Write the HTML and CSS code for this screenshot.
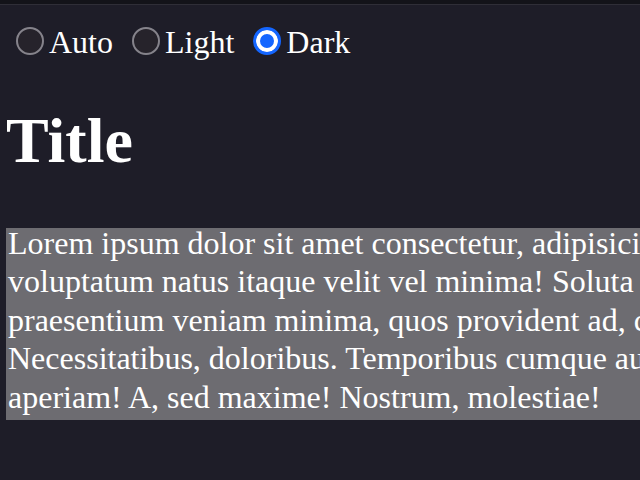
FILE: index.html
```html
<!DOCTYPE html>
<html lang="en">
<head>
<meta charset="utf-8">
<title>Theme</title>
<link rel="stylesheet" href="styles.css">
</head>
<body>
<div class="topbar"></div>
<form class="theme-switch">
  <label class="option"><input type="radio" name="theme" value="auto"><span>Auto</span></label>
  <label class="option"><input type="radio" name="theme" value="light"><span>Light</span></label>
  <label class="option"><input type="radio" name="theme" value="dark" checked><span>Dark</span></label>
</form>
<main class="content">
  <h1 class="title">Title</h1>
  <p class="text"><span class="lines">Lorem ipsum dolor sit amet consectetur, adipisicing elit. Quas eum<br>voluptatum natus itaque velit vel minima! Soluta nemo<br>praesentium veniam minima, quos provident ad, corporis<br>Necessitatibus, doloribus. Temporibus cumque aut<br>aperiam! A, sed maxime! Nostrum, molestiae!</span></p>
</main>
</body>
</html>
```
FILE: styles.css
```css
html, body {
  margin: 0;
  padding: 0;
}
body {
  background: #1e1d28;
  color: #ffffff;
  font-family: "Liberation Serif", "Times New Roman", serif;
  font-size: 32px;
  overflow: hidden;
  height: 480px;
}
.topbar {
  height: 4px;
  background: #131319;
  border-bottom: 1px solid #2f2e37;
}
.theme-switch {
  display: flex;
  align-items: center;
  gap: 19px;
  margin: 19px 0 0 0;
  padding-left: 16px;
  line-height: normal;
}
.option {
  display: inline-flex;
  align-items: center;
  gap: 6px;
}
.option span {
  margin-left: -1px;
}
.option input {
  appearance: none;
  -webkit-appearance: none;
  box-sizing: border-box;
  width: 28px;
  height: 28px;
  margin: 0 0 3px 0;
  border-radius: 50%;
  border: 2px solid #85838b;
  background: #26232b;
}
.option input:checked {
  border: 3px solid #1466ff;
  background: #1466ff;
  box-shadow: inset 0 0 0 4px #ffffff;
}
.content {
  padding-left: 6px;
}
.title {
  font-size: 64px;
  font-weight: bold;
  margin: 43px 0 50px 0;
  line-height: normal;
}
.text {
  margin: 0;
  width: 1100px;
  padding-left: 2px;
  background: #6d6c71;
  line-height: 38.4px;
  white-space: nowrap;
}
.lines {
  line-height: 30px;
  vertical-align: 4px;
}
```
